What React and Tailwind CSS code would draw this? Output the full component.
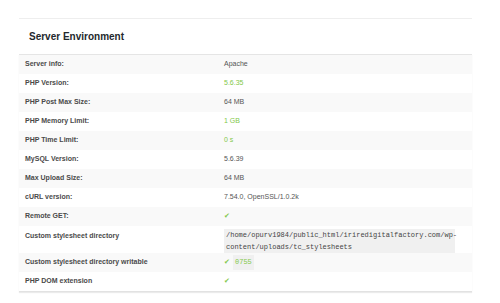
const rows = [
  { label: 'Server info:', value: 'Apache' },
  { label: 'PHP Version:', value: '5.6.35', ok: true },
  { label: 'PHP Post Max Size:', value: '64 MB' },
  { label: 'PHP Memory Limit:', value: '1 GB', ok: true },
  { label: 'PHP Time Limit:', value: '0 s', ok: true },
  { label: 'MySQL Version:', value: '5.6.39' },
  { label: 'Max Upload Size:', value: '64 MB' },
  { label: 'cURL version:', value: '7.54.0, OpenSSL/1.0.2k' },
  { label: 'Remote GET:', check: true },
];

function Check() {
  return <span className="text-[#82c84a] text-[7px]">✔</span>;
}

export default function App() {
  return (
    <main className="w-[500px] h-[303px] bg-white overflow-hidden font-['Liberation_Sans',sans-serif] text-[7px] text-[#444]">
      <div className="ml-[19px] w-[453px] mt-[18px] border-t border-[#eeeeee]">
        <h2 className="h-[35px] flex items-center pl-[10px] text-[10px] font-semibold text-[#23282d]">
          Server Environment
        </h2>
        <div className="border-t border-[#e5e5e5] shadow-[0_1px_1px_rgba(0,0,0,0.08)] border-b border-b-[#e2e2e2]">
          {rows.map((row, i) => (
            <div
              key={i}
              className={`flex h-[19px] items-center ${i % 2 === 0 ? 'bg-[#f9f9f9]' : 'bg-white'}`}
            >
              <div className="w-[205px] pl-[6px] font-semibold text-[#4a4a4a]">{row.label}</div>
              <div className={row.ok ? 'text-[#82c84a]' : 'text-[#555]'}>
                {row.check ? <Check /> : row.value}
              </div>
            </div>
          ))}
          <div className="flex bg-white pt-[3px]">
            <div className="w-[205px] pl-[6px] pt-[2px] font-semibold text-[#4a4a4a]">Custom stylesheet directory</div>
            <div className="bg-[#f0f0f0] px-[2px] font-['Liberation_Mono',monospace] leading-[12px] text-[#444] w-[231px]">
              /home/opurv1984/public_html/iriredigitalfactory.com/wp-<br />content/uploads/tc_stylesheets
            </div>
          </div>
          <div className="flex h-[19px] items-center bg-[#f9f9f9]">
            <div className="w-[205px] pl-[6px] font-semibold text-[#4a4a4a]">Custom stylesheet directory writable</div>
            <div className="flex items-center gap-[3px]">
              <Check />
              <span className="bg-[#f0f0f0] px-[2px] py-[2px] font-['Liberation_Mono',monospace] text-[#82c84a]">0755</span>
            </div>
          </div>
          <div className="flex h-[19px] items-center bg-white">
            <div className="w-[205px] pl-[6px] font-semibold text-[#4a4a4a]">PHP DOM extension</div>
            <div><Check /></div>
          </div>
        </div>
      </div>
    </main>
  );
}
